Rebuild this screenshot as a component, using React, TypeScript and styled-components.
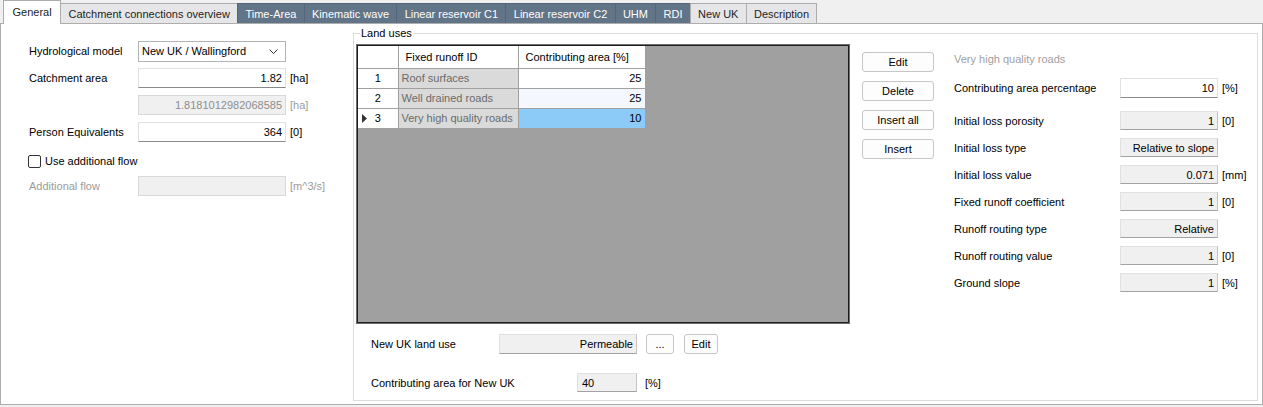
import React from 'react'
import styled, { createGlobalStyle } from 'styled-components'

const GlobalStyle = createGlobalStyle`
  html, body {
    margin: 0;
    padding: 0;
    background: #f0f0f0;
  }
  body {
    font-family: "Liberation Sans", Arial, sans-serif;
    font-size: 11px;
    color: #000;
  }
  * { box-sizing: border-box; }
`

const Window = styled.div`
  width: 1263px;
  height: 407px;
  display: flex;
  flex-direction: column;
  background: #f0f0f0;
  overflow: hidden;
`

const TabStrip = styled.div`
  display: flex;
  align-items: flex-end;
  height: 23px;
  padding-left: 3px;
  position: relative;
  z-index: 1;
`

const Tab = styled.div<{ $active?: boolean; $dark?: boolean }>`
  display: flex;
  align-items: center;
  height: ${p => (p.$active ? '24px' : '20px')};
  margin-bottom: ${p => (p.$active ? '-1px' : '0')};
  padding: ${p => (p.$active ? '0 8.5px 1px' : '0 7.3px')};
  border: 1px solid ${p => (p.$dark ? '#56667a' : '#adadad')};
  border-bottom: none;
  background: ${p => (p.$active ? '#fff' : p.$dark ? '#627487' : '#e6e6e9')};
  color: ${p => (p.$dark ? '#fff' : '#1e1e1e')};
  white-space: nowrap;
  & + & { margin-left: -1px; }
`

const Panel = styled.div`
  height: 382px;
  display: flex;
  align-items: flex-start;
  border: 1px solid #adadad;
  background: #fff;
  padding: 3px 4px 3px 0;
`

const LeftColumn = styled.div`
  width: 352px;
  flex-shrink: 0;
  padding: 14px 0 0 28px;
  display: grid;
  grid-template-columns: 109px 148px auto;
  grid-auto-rows: 20px;
  row-gap: 7px;
  align-items: center;
`

const Label = styled.span<{ $muted?: boolean }>`
  color: ${p => (p.$muted ? '#9b9b9b' : '#000')};
  white-space: nowrap;
`

const Unit = styled.span<{ $muted?: boolean }>`
  margin-left: 4px;
  color: ${p => (p.$muted ? '#9b9b9b' : '#000')};
  white-space: nowrap;
`

const Field = styled.div<{ $kind: 'edit' | 'locked' | 'disabled'; $left?: boolean; $w?: number; $h?: number }>`
  width: ${p => (p.$w ? `${p.$w}px` : '100%')};
  height: ${p => p.$h ?? 20}px;
  display: flex;
  align-items: center;
  justify-content: ${p => (p.$left ? 'flex-start' : 'flex-end')};
  padding: ${p => (p.$left ? '0 0 0 4px' : '0 3px 0 0')};
  background: ${p => (p.$kind === 'edit' ? '#fff' : '#f0f0f0')};
  border: 1px solid ${p => (p.$kind === 'disabled' ? '#d9d9d9' : '#e1e1e1')};
  border-bottom-color: ${p => (p.$kind === 'disabled' ? '#d9d9d9' : p.$kind === 'edit' ? '#8a8a8a' : '#a3a3a3')};
  border-right-color: ${p => (p.$kind === 'locked' ? '#c4c4c4' : undefined)};
  color: ${p => (p.$kind === 'disabled' ? '#8d8d8d' : '#000')};
  white-space: nowrap;
`

const Select = styled.div`
  height: 21px;
  display: flex;
  align-items: center;
  justify-content: space-between;
  padding: 0 7px 0 3px;
  background: #fff;
  border: 1px solid #b3b3b3;
`

const CheckRow = styled.label`
  grid-column: 1 / 3;
  display: flex;
  align-items: center;
  gap: 4px;
  margin: 4px 0 0 -1px;
`

const Check = styled.span`
  width: 13px;
  height: 13px;
  border: 1px solid #333;
  border-radius: 2px;
  background: #fff;
`

const GroupBox = styled.fieldset`
  flex: 1;
  min-width: 0;
  margin: 0;
  padding: 0 0 8px 2px;
  border: 1px solid #dcdcdc;
`

const Legend = styled.legend`
  margin-left: 4px;
  padding: 0 1px;
  line-height: 13px;
`

const TopRow = styled.div`
  display: flex;
  align-items: flex-start;
  margin-top: 4px;
`

const GridView = styled.div`
  width: 494px;
  height: 280px;
  flex-shrink: 0;
  background: #a0a0a0;
  border: 1px solid #6d6d6d;
  box-shadow: inset 0 0 0 1px #1e1e1e;
  padding: 1px;
`

const Table = styled.table`
  border-collapse: collapse;
  table-layout: fixed;
  width: 287px;
`

const HeadCell = styled.th`
  height: 22px;
  padding: 0 7px;
  font-weight: normal;
  text-align: left;
  background: #fff;
  border: 1px solid #a0a0a0;
  border-top: none;
`

const RowHead = styled.td`
  height: 20px;
  padding: 0;
  background: #fff;
  border: 1px solid #a0a0a0;
  border-left: none;
`

const RowHeadInner = styled.div`
  display: grid;
  grid-template-columns: 12px 1fr 12px;
  align-items: center;
  justify-items: center;
`

const IdCell = styled.td`
  padding: 0 3px;
  background: #dadada;
  color: #6b6b6b;
  border: 1px solid #a0a0a0;
  white-space: nowrap;
`

const ValueCell = styled.td<{ $state?: 'plain' | 'alt' | 'selected' }>`
  padding: 0 3px;
  text-align: right;
  background: ${p => (p.$state === 'selected' ? '#8ccbf7' : p.$state === 'alt' ? '#f4f7fd' : '#fff')};
  border: 1px solid #a0a0a0;
`

const ButtonColumn = styled.div`
  display: flex;
  flex-direction: column;
  gap: 9px;
  margin: 8px 0 0 12px;
`

const ActionButton = styled.button<{ $w?: number }>`
  width: ${p => p.$w ?? 72}px;
  height: 20px;
  padding: 0;
  font: inherit;
  color: #000;
  background: #fdfdfd;
  border: 1px solid #c6c6c6;
  border-radius: 3px;
`

const PropsColumn = styled.div`
  display: flex;
  flex-direction: column;
  gap: 8px;
  margin: 8px 0 0 20px;
`

const PropsTitle = styled.div`
  line-height: 14px;
  color: #a0a0a0;
  margin-bottom: 4px;
`

const PropRow = styled.div<{ $spaced?: boolean }>`
  display: grid;
  grid-template-columns: 166px 98px auto;
  align-items: center;
  margin-bottom: ${p => (p.$spaced ? '5px' : '0')};
`

const BottomRow = styled.div<{ $labelWidth: number; $gapTop: number }>`
  display: flex;
  align-items: center;
  margin-top: ${p => p.$gapTop}px;
  padding-left: 15px;
  & > ${Label} { width: ${p => p.$labelWidth}px; }
`

const Chevron = () => (
  <svg width="9" height="5" viewBox="0 0 9 5">
    <polyline points="0.5,0.5 4.5,4.5 8.5,0.5" fill="none" stroke="#333" strokeWidth="1" />
  </svg>
)

const RowMarker = () => (
  <svg width="5" height="9" viewBox="0 0 5 9">
    <polygon points="0,0 5,4.5 0,9" fill="#333" />
  </svg>
)

const tabs = [
  { name: 'General', active: true },
  { name: 'Catchment connections overview' },
  { name: 'Time-Area', dark: true },
  { name: 'Kinematic wave', dark: true },
  { name: 'Linear reservoir C1', dark: true },
  { name: 'Linear reservoir C2', dark: true },
  { name: 'UHM', dark: true },
  { name: 'RDI', dark: true },
  { name: 'New UK' },
  { name: 'Description' },
]

const landUses = [
  { id: 'Roof surfaces', area: 25, state: 'plain' as const },
  { id: 'Well drained roads', area: 25, state: 'alt' as const },
  { id: 'Very high quality roads', area: 10, state: 'selected' as const, current: true },
]

const props = [
  { label: 'Initial loss porosity', value: '1', unit: '[0]' },
  { label: 'Initial loss type', value: 'Relative to slope' },
  { label: 'Initial loss value', value: '0.071', unit: '[mm]' },
  { label: 'Fixed runoff coefficient', value: '1', unit: '[0]' },
  { label: 'Runoff routing type', value: 'Relative' },
  { label: 'Runoff routing value', value: '1', unit: '[0]' },
  { label: 'Ground slope', value: '1', unit: '[%]' },
]

const App = () => {
  return (
    <Window>
      <GlobalStyle />
      <TabStrip>
        {tabs.map(t => (
          <Tab key={t.name} $active={t.active} $dark={t.dark}>{t.name}</Tab>
        ))}
      </TabStrip>
      <Panel>
        <LeftColumn>
          <Label>Hydrological model</Label>
          <Select>
            <span>New UK / Wallingford</span>
            <Chevron />
          </Select>
          <span />

          <Label>Catchment area</Label>
          <Field $kind="edit">1.82</Field>
          <Unit>[ha]</Unit>

          <span />
          <Field $kind="disabled">1.8181012982068585</Field>
          <Unit $muted>[ha]</Unit>

          <Label>Person Equivalents</Label>
          <Field $kind="edit">364</Field>
          <Unit>[0]</Unit>

          <CheckRow>
            <Check />
            <span>Use additional flow</span>
          </CheckRow>
          <span />

          <Label $muted>Additional flow</Label>
          <Field $kind="disabled" />
          <Unit $muted>[m^3/s]</Unit>
        </LeftColumn>

        <GroupBox>
          <Legend>Land uses</Legend>
          <TopRow>
            <GridView>
              <Table>
                <colgroup>
                  <col style={{ width: 40 }} />
                  <col style={{ width: 120 }} />
                  <col style={{ width: 127 }} />
                </colgroup>
                <thead>
                  <tr>
                    <HeadCell style={{ borderLeft: 'none' }} />
                    <HeadCell>Fixed runoff ID</HeadCell>
                    <HeadCell>Contributing area [%]</HeadCell>
                  </tr>
                </thead>
                <tbody>
                  {landUses.map((row, i) => (
                    <tr key={row.id}>
                      <RowHead>
                        <RowHeadInner>
                          {row.current ? <RowMarker /> : <span />}
                          <span>{i + 1}</span>
                        </RowHeadInner>
                      </RowHead>
                      <IdCell>{row.id}</IdCell>
                      <ValueCell $state={row.state}>{row.area}</ValueCell>
                    </tr>
                  ))}
                </tbody>
              </Table>
            </GridView>

            <ButtonColumn>
              <ActionButton>Edit</ActionButton>
              <ActionButton>Delete</ActionButton>
              <ActionButton>Insert all</ActionButton>
              <ActionButton>Insert</ActionButton>
            </ButtonColumn>

            <PropsColumn>
              <PropsTitle>Very high quality roads</PropsTitle>
              <PropRow $spaced>
                <Label>Contributing area percentage</Label>
                <Field $kind="edit">10</Field>
                <Unit>[%]</Unit>
              </PropRow>
              {props.map(p => (
                <PropRow key={p.label}>
                  <Label>{p.label}</Label>
                  <Field $kind="locked" $h={19}>{p.value}</Field>
                  {p.unit ? <Unit>{p.unit}</Unit> : <span />}
                </PropRow>
              ))}
            </PropsColumn>
          </TopRow>

          <BottomRow $labelWidth={128} $gapTop={10}>
            <Label>New UK land use</Label>
            <Field $kind="locked" $w={138}>Permeable</Field>
            <ActionButton $w={28} style={{ marginLeft: 9 }}>...</ActionButton>
            <ActionButton $w={34} style={{ marginLeft: 10 }}>Edit</ActionButton>
          </BottomRow>

          <BottomRow $labelWidth={206} $gapTop={19}>
            <Label>Contributing area for New UK</Label>
            <Field $kind="locked" $w={60} $h={19} $left>40</Field>
            <Unit style={{ marginLeft: 8 }}>[%]</Unit>
          </BottomRow>
        </GroupBox>
      </Panel>
    </Window>
  )
}

export default App
